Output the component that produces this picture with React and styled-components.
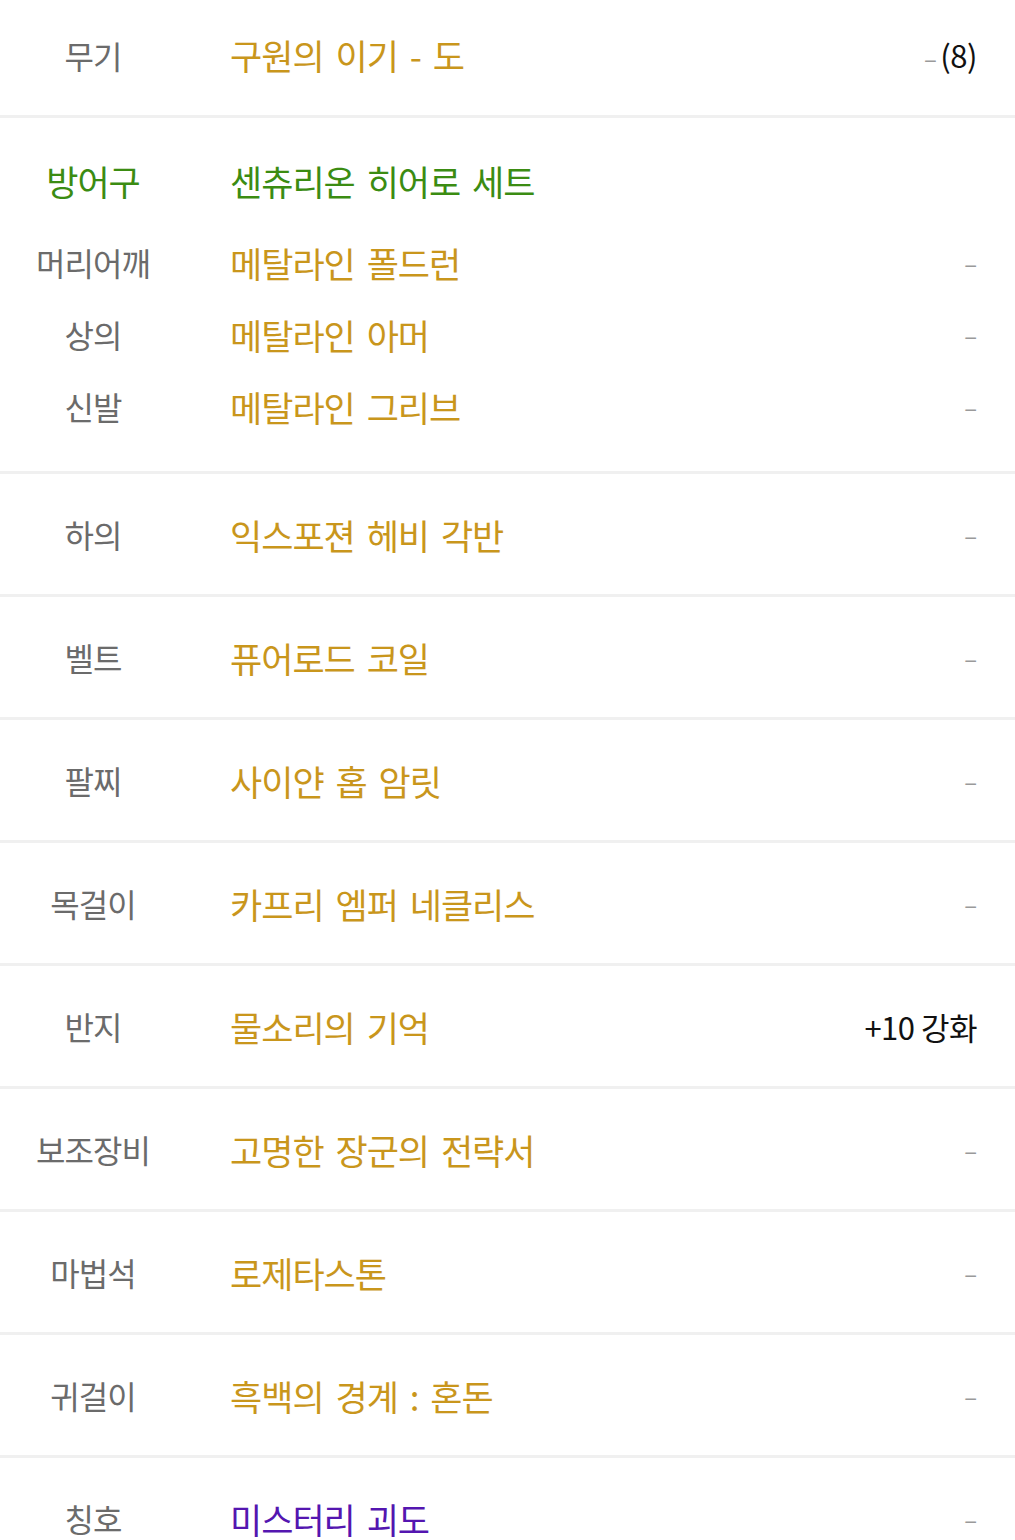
import React from "react";
import styled, { createGlobalStyle } from "styled-components";

const GlobalStyle = createGlobalStyle`
  body {
    margin: 0;
    background: #fff;
    font-family: "Noto Sans CJK KR", "Noto Sans", sans-serif;
  }
`;

const COLORS = {
  unique: "#c9961c",
  set: "#3b8c12",
  legend: "#5416b0",
};

const List = styled.div`
  width: 1015px;
  background: #fff;
`;

const Section = styled.div`
  border-bottom: 3px solid #f0f0f0;
  padding: ${(p) => p.$pad || "0"};
`;

const Row = styled.div`
  display: grid;
  grid-template-columns: 186px 1fr auto;
  column-gap: 44px;
  align-items: center;
  box-sizing: border-box;
  height: ${(p) => p.$h || 120}px;
  padding-right: 38px;
  padding-bottom: ${(p) => p.$lift || 0}px;
`;

const Slot = styled.div`
  text-align: center;
  font-size: ${(p) => (p.$head ? 35 : 32)}px;
  letter-spacing: -1px;
  color: ${(p) => p.$color || "#6b6b6b"};
  white-space: nowrap;
`;

const Name = styled.div`
  font-size: 35px;
  letter-spacing: -1px;
  word-spacing: 5px;
  color: ${(p) => p.$color};
  white-space: nowrap;
`;

const Extra = styled.div`
  font-size: 31px;
  color: #111;
  white-space: nowrap;
  letter-spacing: -0.5px;
`;

const Dash = styled.span`
  color: #9a9a9a;
  font-size: 24px;
  margin-right: ${(p) => p.$gap || 0}px;
`;

const SetGroup = ({ title, items }) => (
  <Section $pad="26px 0 29px">
    <Row $h={72} style={{ marginBottom: 10 }}>
      <Slot $head $color={COLORS.set}>방어구</Slot>
      <Name $color={COLORS.set}>{title}</Name>
      <span />
    </Row>
    {items.map((it) => (
      <Row key={it.slot} $h={72}>
        <Slot>{it.slot}</Slot>
        <Name $color={COLORS.unique}>{it.name}</Name>
        <Dash>–</Dash>
      </Row>
    ))}
  </Section>
);

const items = [
  { slot: "하의", name: "익스포젼 헤비 각반" },
  { slot: "벨트", name: "퓨어로드 코일" },
  { slot: "팔찌", name: "사이얀 홉 암릿" },
  { slot: "목걸이", name: "카프리 엠퍼 네클리스" },
  { slot: "반지", name: "물소리의 기억", extra: "+10 강화" },
  { slot: "보조장비", name: "고명한 장군의 전략서" },
  { slot: "마법석", name: "로제타스톤" },
  { slot: "귀걸이", name: "흑백의 경계 : 혼돈" },
  { slot: "칭호", name: "미스터리 괴도", color: COLORS.legend },
];

export default function App() {
  return (
    <>
      <GlobalStyle />
      <List>
        <Section>
          <Row $h={115} $lift={6}>
            <Slot>무기</Slot>
            <Name $color={COLORS.unique}>구원의 이기 - 도</Name>
            <Extra>
              <Dash $gap={4}>–</Dash>(8)
            </Extra>
          </Row>
        </Section>
        <SetGroup
          title="센츄리온 히어로 세트"
          items={[
            { slot: "머리어깨", name: "메탈라인 폴드런" },
            { slot: "상의", name: "메탈라인 아머" },
            { slot: "신발", name: "메탈라인 그리브" },
          ]}
        />
        {items.map((it) => (
          <Section key={it.slot}>
            <Row>
              <Slot>{it.slot}</Slot>
              <Name $color={it.color || COLORS.unique}>{it.name}</Name>
              {it.extra ? <Extra>{it.extra}</Extra> : <Dash>–</Dash>}
            </Row>
          </Section>
        ))}
      </List>
    </>
  );
}
